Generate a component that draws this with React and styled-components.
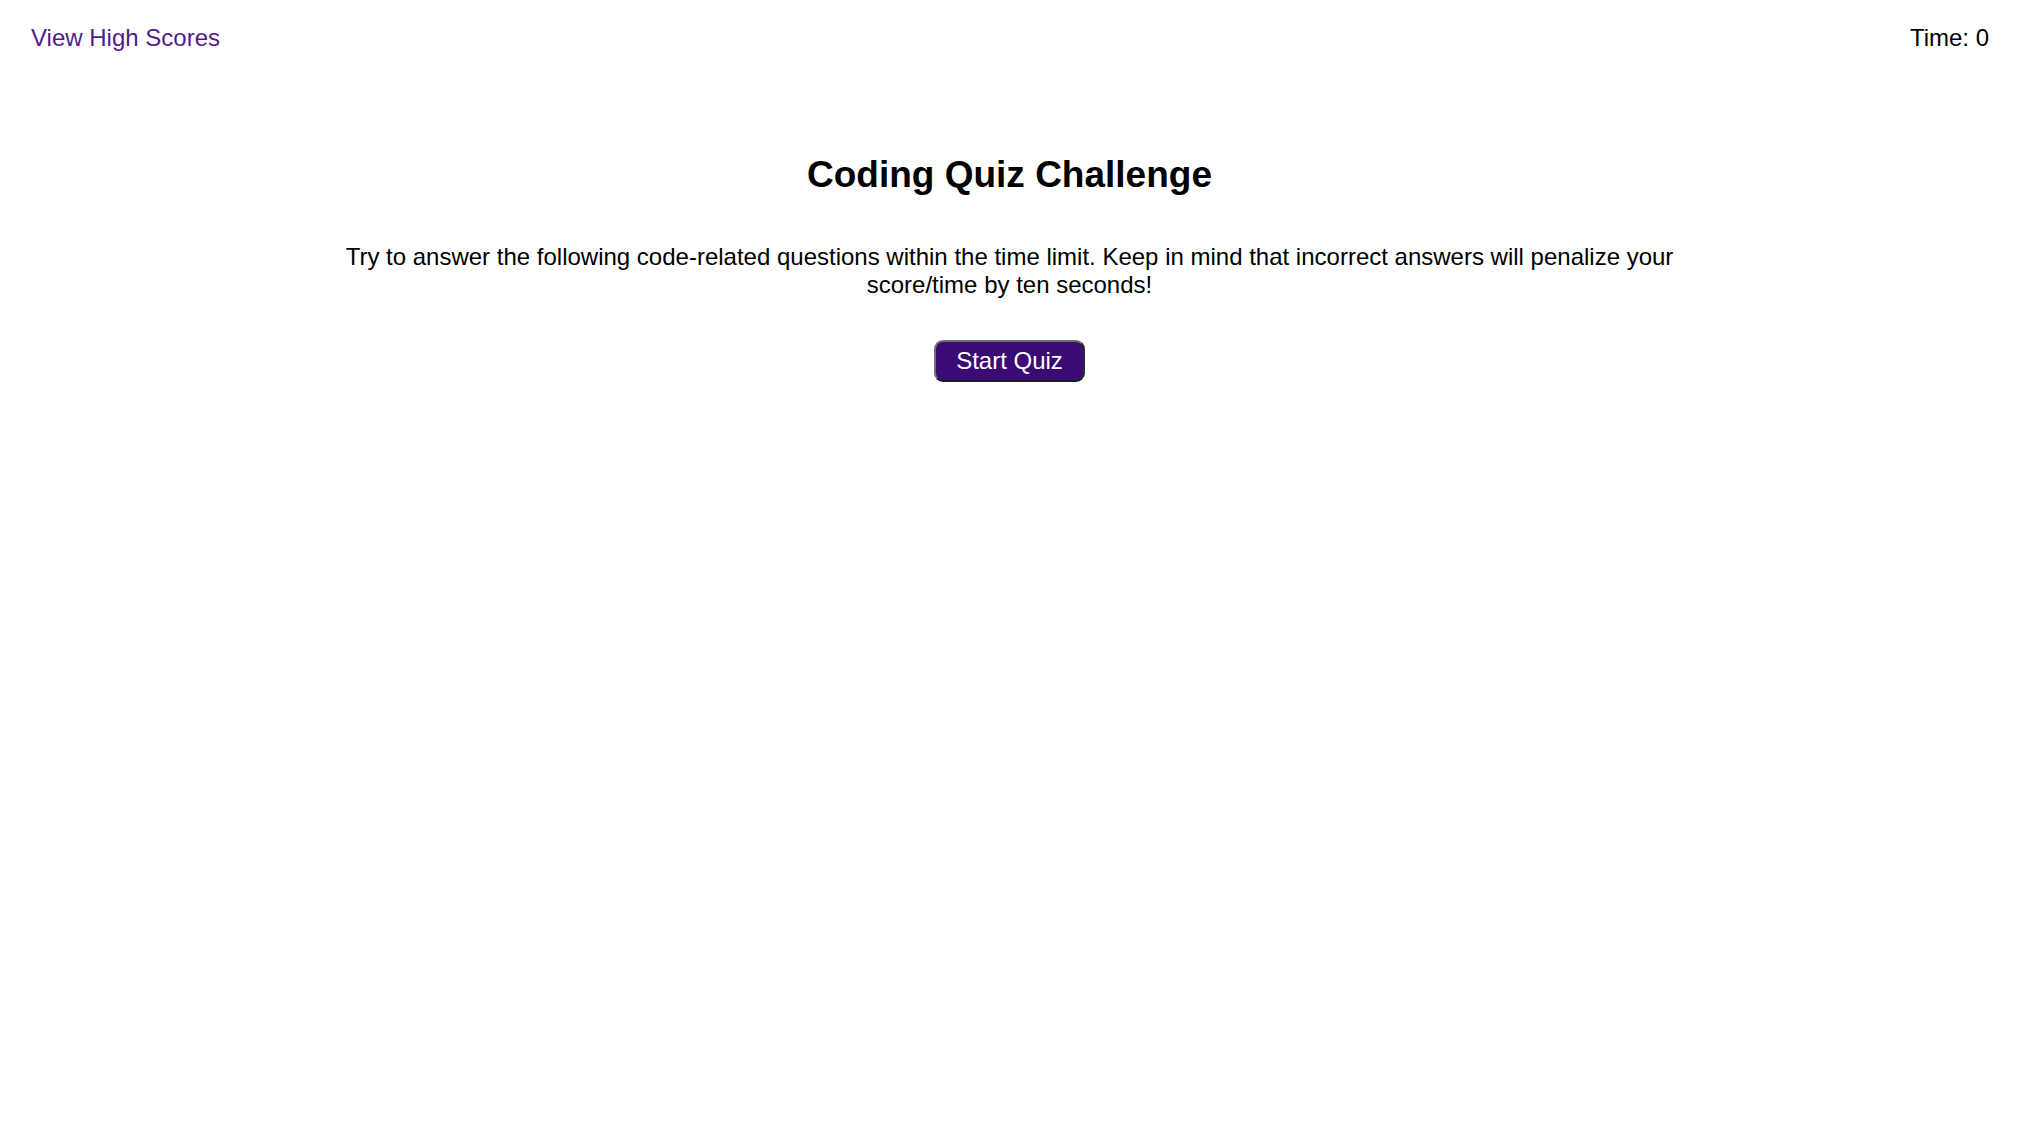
import React from 'react';
import styled, { createGlobalStyle } from 'styled-components';

const GlobalStyle = createGlobalStyle`
  html, body {
    margin: 0;
    padding: 0;
    background: #ffffff;
  }
  body {
    font-family: "Liberation Sans", Arial, Helvetica, sans-serif;
    color: #000000;
  }
`;

const Header = styled.header`
  display: flex;
  justify-content: space-between;
  align-items: flex-start;
  padding: 24px 30px 0 31px;
  font-size: 24px;
  line-height: 27px;
`;

const HighScoresLink = styled.a`
  color: #551a8b;
  text-decoration: none;
  cursor: pointer;
`;

const Timer = styled.div`
  color: #000;
`;

const Main = styled.main`
  display: flex;
  flex-direction: column;
  align-items: center;
  text-align: center;
  padding-top: 104px;
`;

const Title = styled.h1`
  margin: 0;
  font-size: 37px;
  line-height: 40px;
  font-weight: 700;
`;

const Intro = styled.p`
  margin: 48px 0 0;
  max-width: 1400px;
  font-size: 24px;
  line-height: 28px;
`;

const StartButton = styled.button`
  margin-top: 41px;
  padding: 5px 20px;
  font-family: inherit;
  font-size: 24px;
  line-height: 28px;
  color: #ffffff;
  background: #3a0a75;
  border: 2px solid;
  border-color: #707070 #2a2a2a #1c1c1c #707070;
  border-radius: 9px;
  cursor: pointer;
`;

const App = () => {
  return (
    <>
      <GlobalStyle />
      <Header>
        <HighScoresLink href="#highscores">View High Scores</HighScoresLink>
        <Timer>Time: 0</Timer>
      </Header>
      <Main>
        <Title>Coding Quiz Challenge</Title>
        <Intro>
          Try to answer the following code-related questions within the time limit. Keep in mind that incorrect answers will penalize your score/time by ten seconds!
        </Intro>
        <StartButton>Start Quiz</StartButton>
      </Main>
    </>
  );
};

export default App;
